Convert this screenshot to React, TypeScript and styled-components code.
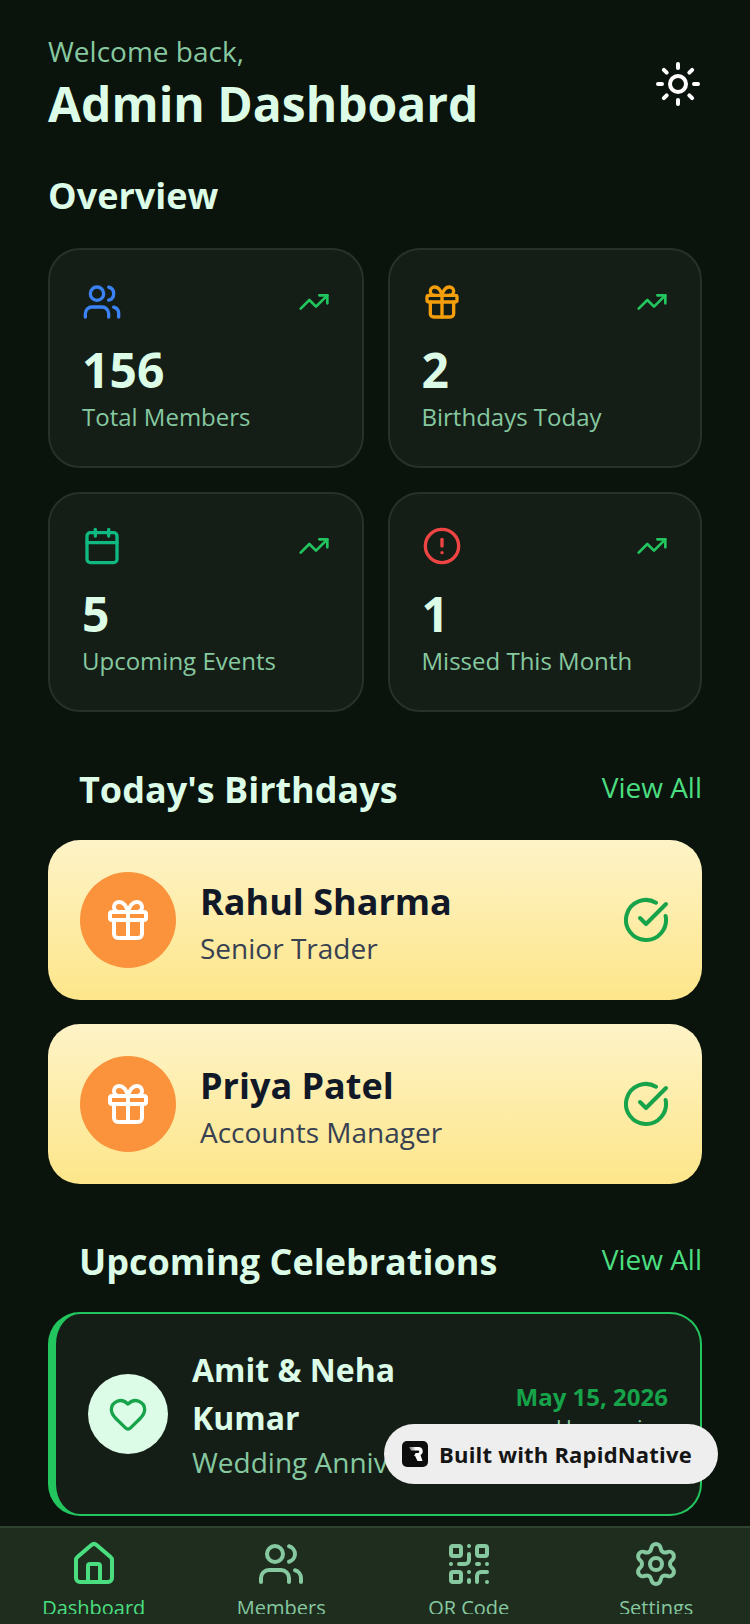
import React from "react"
import styled, { createGlobalStyle } from "styled-components"
import {
  Calendar,
  CircleAlert,
  CircleCheckBig,
  Gift,
  Heart,
  House,
  QrCode,
  Settings,
  Sun,
  TrendingUp,
  Users,
} from "lucide-react"

const GlobalStyle = createGlobalStyle`
  html, body {
    margin: 0;
    padding: 0;
    background: #0a130c;
  }
  * {
    box-sizing: border-box;
  }
`

const stats = [
  { icon: Users, color: "#3b82f6", value: "156", label: "Total Members" },
  { icon: Gift, color: "#f59e0b", value: "2", label: "Birthdays Today" },
  { icon: Calendar, color: "#10b981", value: "5", label: "Upcoming Events" },
  { icon: CircleAlert, color: "#ef4444", value: "1", label: "Missed This Month" },
]

const birthdays = [
  { name: "Rahul Sharma", role: "Senior Trader" },
  { name: "Priya Patel", role: "Accounts Manager" },
]

const tabs = [
  { icon: House, label: "Dashboard", active: true },
  { icon: Users, label: "Members", active: false },
  { icon: QrCode, label: "QR Code", active: false },
  { icon: Settings, label: "Settings", active: false },
]

export default function App() {
  return (
    <>
      <GlobalStyle />
      <Screen>
        <Content>
          <Header>
            <div>
              <Welcome>Welcome back,</Welcome>
              <Title>Admin Dashboard</Title>
            </div>
            <Sun size={48} color="#ffffff" strokeWidth={2} />
          </Header>

          <Overview>Overview</Overview>
          <StatGrid>
            {stats.map((s) => (
              <StatCard key={s.label}>
                <StatTop>
                  <s.icon size={40} color={s.color} strokeWidth={2} />
                  <TrendingUp size={32} color="#22c55e" strokeWidth={2} />
                </StatTop>
                <StatValue>{s.value}</StatValue>
                <StatLabel>{s.label}</StatLabel>
              </StatCard>
            ))}
          </StatGrid>

          <SectionHead>
            <SectionTitle>Today's Birthdays</SectionTitle>
            <ViewAll>View All</ViewAll>
          </SectionHead>
          <BirthdayList>
            {birthdays.map((b) => (
              <BirthdayCard key={b.name}>
                <GiftCircle>
                  <Gift size={48} color="#ffffff" strokeWidth={2} />
                </GiftCircle>
                <BirthdayText>
                  <BirthdayName>{b.name}</BirthdayName>
                  <BirthdayRole>{b.role}</BirthdayRole>
                </BirthdayText>
                <CircleCheckBig size={48} color="#16a34a" strokeWidth={2} />
              </BirthdayCard>
            ))}
          </BirthdayList>

          <SectionHead>
            <SectionTitle>Upcoming Celebrations</SectionTitle>
            <ViewAll>View All</ViewAll>
          </SectionHead>
          <CelebrationCard>
            <HeartCircle>
              <Heart size={40} color="#16a34a" strokeWidth={2} />
            </HeartCircle>
            <CelebrationText>
              <CelebrationName>Amit &amp; Neha Kumar</CelebrationName>
              <CelebrationType>Wedding Anniversary</CelebrationType>
            </CelebrationText>
            <CelebrationDate>
              <DateText>May 15, 2026</DateText>
              <DateNote>Happening</DateNote>
            </CelebrationDate>
          </CelebrationCard>
        </Content>

        <TabBar>
          {tabs.map((t) => (
            <Tab key={t.label} $active={t.active}>
              <t.icon size={48} strokeWidth={2} />
              <TabLabel>{t.label}</TabLabel>
            </Tab>
          ))}
        </TabBar>

        <Badge>
          <BadgeLogo viewBox="0 0 26 26">
            <defs>
              <linearGradient id="badgeR" x1="0" y1="0" x2="1" y2="0">
                <stop offset="0" stopColor="#6b6b6b" />
                <stop offset="0.5" stopColor="#ffffff" />
              </linearGradient>
            </defs>
            <rect width="26" height="26" rx="5" fill="#0d0d0d" />
            <path d="M7 6h9.5a4.2 4.2 0 0 1 2 7.9L20.5 20h-5l-2.4-5H12l1.6-3h2.4a1.2 1.2 0 0 0 0-2.6H9z" fill="url(#badgeR)" />
          </BadgeLogo>
          <BadgeText>Built with RapidNative</BadgeText>
        </Badge>
      </Screen>
    </>
  )
}

const Screen = styled.div`
  position: relative;
  width: 750px;
  height: 1624px;
  overflow: hidden;
  display: flex;
  flex-direction: column;
  background: #0a130c;
  font-family: "Open Sans", "Noto Sans", sans-serif;
`

const Content = styled.div`
  flex: 1;
  min-height: 0;
  overflow: hidden;
  padding: 32px 48px 0;
`

const Header = styled.div`
  display: flex;
  justify-content: space-between;
  align-items: center;
  height: 104px;
`

const Welcome = styled.div`
  font-size: 28px;
  line-height: 39px;
  color: #86c8a0;
`

const Title = styled.div`
  margin-top: 1px;
  font-size: 48px;
  line-height: 64px;
  font-weight: 700;
  color: #dcfce7;
`

const Overview = styled.div`
  margin-top: 36px;
  font-size: 36px;
  line-height: 48px;
  font-weight: 700;
  color: #dcfce7;
`

const StatGrid = styled.div`
  display: grid;
  grid-template-columns: 315.5px 314.5px;
  gap: 24px;
  margin-top: 28px;
`

const StatCard = styled.div`
  height: 220px;
  padding: 32px;
  border: 2px solid #263228;
  border-radius: 32px;
  background: #151e16;
`

const StatTop = styled.div`
  display: flex;
  justify-content: space-between;
  align-items: center;
  height: 40px;
`

const StatValue = styled.div`
  margin-top: 20px;
  font-size: 48px;
  line-height: 56px;
  font-weight: 700;
  color: #dcfce7;
`

const StatLabel = styled.div`
  margin-top: 3px;
  font-size: 24px;
  line-height: 32px;
  color: #86c8a0;
`

const SectionHead = styled.div`
  display: flex;
  justify-content: space-between;
  align-items: center;
  margin-top: 54px;
  padding-left: 31px;
`

const SectionTitle = styled.div`
  font-size: 36px;
  line-height: 48px;
  font-weight: 700;
  color: #dcfce7;
`

const ViewAll = styled.div`
  margin-top: -6px;
  font-size: 28px;
  line-height: 40px;
  color: #4ade80;
`

const BirthdayList = styled.div`
  display: flex;
  flex-direction: column;
  gap: 24px;
  margin-top: 26px;
`

const BirthdayCard = styled.div`
  display: flex;
  align-items: center;
  height: 160px;
  padding: 0 32px;
  border-radius: 32px;
  background: linear-gradient(180deg, #fef3c7, #fde68a);
`

const GiftCircle = styled.div`
  display: flex;
  align-items: center;
  justify-content: center;
  flex: none;
  width: 96px;
  height: 96px;
  border-radius: 50%;
  background: #fb923c;
`

const BirthdayText = styled.div`
  flex: 1;
  margin-left: 24px;
  padding-top: 3px;
`

const BirthdayName = styled.div`
  font-size: 36px;
  line-height: 48px;
  font-weight: 700;
  color: #111827;
`

const BirthdayRole = styled.div`
  margin-top: 4px;
  font-size: 28px;
  line-height: 36px;
  color: #374151;
`

const CelebrationCard = styled.div`
  display: flex;
  align-items: center;
  margin-top: 26px;
  height: 204px;
  padding: 0 32px;
  border: 2px solid #22c55e;
  border-left-width: 8px;
  border-radius: 32px;
  background: #151e16;
`

const HeartCircle = styled.div`
  display: flex;
  align-items: center;
  justify-content: center;
  flex: none;
  width: 80px;
  height: 80px;
  border-radius: 50%;
  background: #dcfce7;
`

const CelebrationText = styled.div`
  flex: 1;
  min-width: 0;
  margin-left: 24px;
`

const CelebrationName = styled.div`
  max-width: 270px;
  font-size: 32px;
  line-height: 48px;
  font-weight: 700;
  color: #dcfce7;
`

const CelebrationType = styled.div`
  font-size: 28px;
  line-height: 40px;
  white-space: nowrap;
  color: #86c8a0;
`

const CelebrationDate = styled.div`
  flex: none;
  margin-bottom: 6px;
  text-align: right;
`

const DateText = styled.div`
  font-size: 24px;
  line-height: 32px;
  font-weight: 700;
  color: #16a34a;
`

const DateNote = styled.div`
  font-size: 22px;
  line-height: 28px;
  color: #86c8a0;
`

const TabBar = styled.div`
  flex: none;
  display: grid;
  grid-template-columns: repeat(4, 1fr);
  height: 98px;
  border-top: 2px solid #2e4430;
  background: #1e2d1d;
`

const Tab = styled.div<{ $active: boolean }>`
  display: flex;
  flex-direction: column;
  align-items: center;
  height: 86px;
  padding-top: 12px;
  overflow: hidden;
  color: ${(p) => (p.$active ? "#4ade80" : "#86c8a0")};

  svg {
    flex: none;
  }
`

const TabLabel = styled.div`
  flex: none;
  margin-top: 6px;
  font-size: 20px;
  line-height: 28px;
`

const Badge = styled.div`
  position: absolute;
  left: 384px;
  top: 1424px;
  display: flex;
  align-items: center;
  gap: 11px;
  width: 334px;
  height: 60px;
  padding-left: 18px;
  border-radius: 30px;
  background: #eeeeee;
`

const BadgeLogo = styled.svg`
  width: 26px;
  height: 26px;
  flex: none;
`

const BadgeText = styled.div`
  font-size: 22px;
  font-weight: 700;
  letter-spacing: 0.2px;
  color: #151515;
  white-space: nowrap;
`
